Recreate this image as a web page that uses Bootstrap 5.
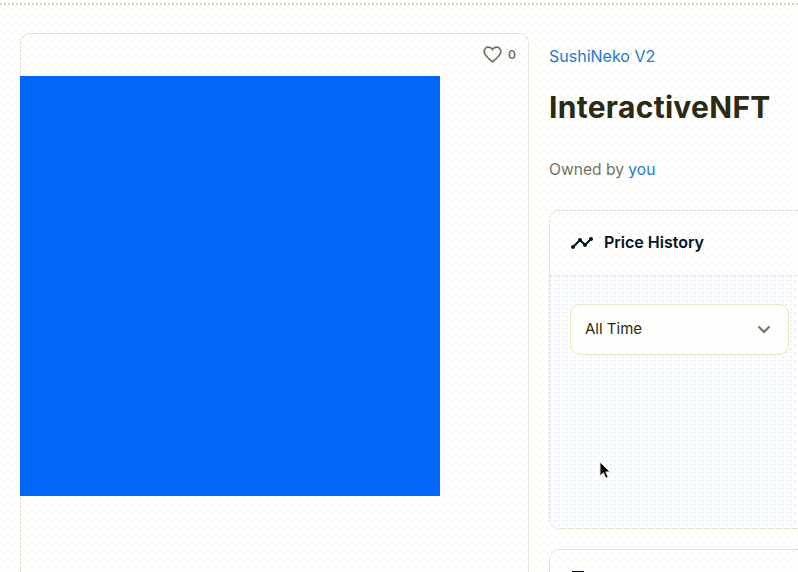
<!DOCTYPE html>
<html lang="en">

<head>
  <meta charset="UTF-8" />
  <meta name="viewport" content="width=device-width, initial-scale=1" />
  <title>InteractiveNFT</title>
  <link href="https://cdn.jsdelivr.net/npm/bootstrap@5.3.3/dist/css/bootstrap.min.css" rel="stylesheet" />
  <style>
    html,
    body {
      height: 572px;
      overflow: hidden;
    }

    body {
      position: relative;
      font-family: Inter, "Open Sans", sans-serif;
      background-color: #fffffd;
      background-image:
        radial-gradient(circle at 0.5px 0.5px, #ffec50 0.7px, transparent 0.8px),
        radial-gradient(circle at 0.5px 0.5px, #ffec50 0.7px, transparent 0.8px);
      background-size: 8px 8px;
      background-position: 3px 1px, 7px 5px;
    }

    .top-strip {
      height: 5px;
      border-bottom: 2px dotted #d0d2ca;
    }

    .item-page {
      width: 930px;
      padding: 28px 0 0 20px;
      gap: 20px;
    }

    .media-side {
      flex: 0 0 509px;
      height: 600px;
      border: 1px dotted #c9cbb4;
      border-radius: 10px;
      background: transparent;
    }

    .like-row {
      height: 42px;
      padding: 0 12px 0 0;
      gap: 5px;
      font-size: 12px;
      font-weight: 600;
      color: #6f7364;
    }

    .like-row svg {
      margin-bottom: 2px;
    }

    .blue-art {
      width: 420px;
      height: 420px;
      margin-left: -1px;
      background-color: #0066fa;
      background-image: radial-gradient(circle at 0.5px 0.5px, #0f74ff 0.7px, transparent 0.8px);
      background-size: 4px 4px;
    }

    .info-side {
      flex: 0 0 380px;
    }

    .collection-link,
    .owner-link {
      color: #2279d4;
      text-decoration: none;
    }

    .collection-link {
      display: block;
      font-size: 16px;
      line-height: 22px;
      margin-top: 12px;
    }

    .item-title {
      font-size: 30px;
      line-height: 40px;
      font-weight: 700;
      color: #2b2a14;
      margin: 20px 0 0;
      letter-spacing: 0.3px;
    }

    .owned-line {
      font-size: 15.6px;
      line-height: 22px;
      color: #6f7364;
      margin: 32px 0 29px;
    }

    .panel-box {
      background: transparent;
      border: 1px dotted #c9cbb4;
      border-radius: 10px;
    }

    .panel-box+.panel-box {
      margin-top: 20px;
    }

    .panel-box .card-header {
      height: 65px;
      padding: 0 20px;
      gap: 10px;
      font-size: 16px;
      font-weight: 600;
      color: #04111d;
      background: transparent;
      border-bottom: 1px dotted #ccd4ee;
    }

    .panel-box .card-header span {
      margin-top: -2px;
    }

    .panel-body {
      height: 252px;
      padding: 28px 20px;
      border-radius: 0 0 10px 10px;
      background-image: radial-gradient(circle at 0.5px 0.5px, #d3daf2 0.7px, transparent 0.8px);
      background-size: 4px 4px;
    }

    .time-picker {
      width: 219px;
      height: 51px;
      padding: 0 17px 0 14px;
      font-size: 15px;
      color: #2b2a14;
      background-color: #fffffd;
      background-image: radial-gradient(circle at 0.5px 0.5px, #ffec50 0.7px, transparent 0.8px);
      background-size: 8px 8px;
      border: 1px solid #e6e8c0;
      border-radius: 10px;
    }

    .mouse-arrow {
      position: absolute;
      left: 599px;
      top: 461px;
    }
  </style>
</head>

<body>

  <div class="top-strip"></div>

  <div class="item-page d-flex align-items-start">
    <div class="card media-side">
      <div class="like-row d-flex justify-content-end align-items-center">
        <svg width="21" height="21" viewBox="0 0 24 24" fill="none" stroke="#6f7364" stroke-width="2">
          <path d="M12 20.5C6 15.5 2.5 12.3 2.5 8.5 2.5 5.6 4.7 3.5 7.4 3.5c1.8 0 3.6 1 4.6 2.7 1-1.7 2.8-2.7 4.6-2.7 2.7 0 4.9 2.1 4.9 5 0 3.8-3.5 7-9.5 12z" />
        </svg>
        <span>0</span>
      </div>
      <div class="blue-art"></div>
    </div>

    <div class="info-side">
      <a href="#" class="collection-link">SushiNeko V2</a>
      <h1 class="item-title">InteractiveNFT</h1>
      <p class="owned-line">Owned by <a href="#" class="owner-link">you</a></p>

      <div class="card panel-box">
        <div class="card-header d-flex align-items-center">
          <svg width="24" height="24" viewBox="0 0 24 24" fill="#04111d">
            <path d="M23 8c0 1.1-.9 2-2 2-.18 0-.35-.02-.51-.07l-3.56 3.55c.05.16.07.34.07.52 0 1.1-.9 2-2 2s-2-.9-2-2c0-.18.02-.36.07-.52l-2.55-2.55c-.16.05-.34.07-.52.07s-.36-.02-.52-.07l-4.55 4.56c.05.16.07.33.07.51 0 1.1-.9 2-2 2s-2-.9-2-2 .9-2 2-2c.18 0 .35.02.51.07l4.56-4.55C8.02 9.36 8 9.18 8 9c0-1.1.9-2 2-2s2 .9 2 2c0 .18-.02.36-.07.52l2.55 2.55c.16-.05.34-.07.52-.07s.36.02.52.07l3.55-3.56C19.02 8.35 19 8.18 19 8c0-1.1.9-2 2-2s2 .9 2 2z" />
          </svg>
          <span>Price History</span>
        </div>
        <div class="panel-body">
          <div class="time-picker d-flex align-items-center justify-content-between">
            <span>All Time</span>
            <svg width="14" height="9" viewBox="0 0 14 9" fill="none" stroke="#6f7364" stroke-width="2">
              <path d="M1.5 1.5 7 7l5.5-5.5" />
            </svg>
          </div>
        </div>
      </div>

      <div class="card panel-box">
        <div class="card-header d-flex align-items-center">
          <svg width="24" height="24" viewBox="0 0 24 24" fill="#04111d">
            <rect x="2" y="1" width="12" height="2" />
          </svg>
        </div>
      </div>
    </div>
  </div>

  <svg class="mouse-arrow" width="13" height="19" viewBox="0 0 13 19">
    <path d="M1 1v14l3.4-3.2 2.4 5.4 2.4-1-2.4-5.3H11z" fill="#000" stroke="#e6e6d8" stroke-width="1" />
  </svg>

</body>

</html>
